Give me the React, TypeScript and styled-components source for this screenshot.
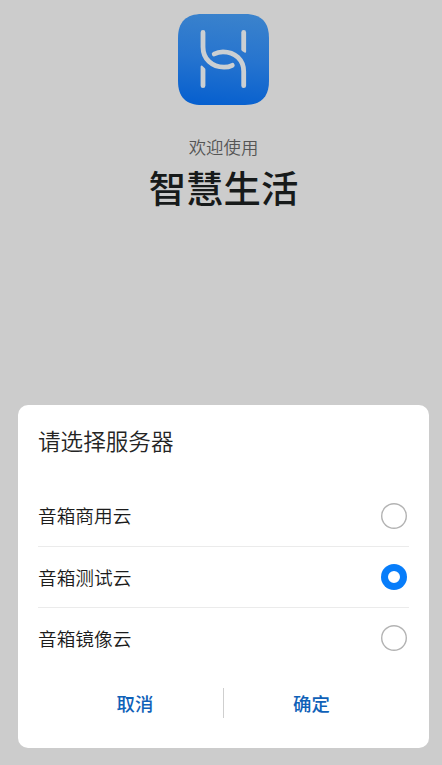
import React, { useState } from 'react';
import styled, { createGlobalStyle } from 'styled-components';

const GlobalStyle = createGlobalStyle`
  * { box-sizing: border-box; }
  html, body { margin: 0; background: #cccccc; }
  body { font-family: "Noto Sans CJK SC", sans-serif; overflow: hidden; }
  button { font-family: inherit; border: 0; background: none; padding: 0; }
`;

const Screen = styled.div`
  display: flex;
  flex-direction: column;
  justify-content: space-between;
  width: 442px;
  height: 765px;
  padding: 14px 13px 17px 18px;
  background: #cccccc;
`;

const Hero = styled.header`
  display: flex;
  flex-direction: column;
  align-items: center;
  width: 411px;
`;

const Logo = styled.svg`
  display: block;
  width: 91px;
  height: 91px;
`;

const Welcome = styled.p`
  margin: 28px 0 0;
  font-size: 17.4px;
  font-weight: 350;
  line-height: 28px;
  color: #555555;
`;

const AppName = styled.h1`
  margin: 1px 0 0;
  font-size: 37.4px;
  font-weight: 500;
  line-height: 50px;
  color: #171a1a;
`;

const Dialog = styled.section`
  display: flex;
  flex-direction: column;
  height: 343px;
  padding: 0 20px;
  border-radius: 10px;
  background: #ffffff;
`;

const DialogTitle = styled.h2`
  margin: 19px 0 0;
  font-size: 22.6px;
  font-weight: 350;
  line-height: 34px;
  color: #242424;
`;

const Options = styled.div`
  display: flex;
  flex-direction: column;
  margin-top: 27px;
`;

const Option = styled.button`
  display: flex;
  align-items: center;
  justify-content: space-between;
  height: 61px;
  padding-right: 2px;
  font-size: 18.7px;
  font-weight: 350;
  color: #1c1c1c;
  & + & { border-top: 1px solid #ebebeb; }
`;

const OptionName = styled.span`
  padding-bottom: 2px;
`;

const Radio = styled.span<{ $checked: boolean }>`
  width: 26px;
  height: 26px;
  border-radius: 50%;
  box-shadow: inset 0 0 0 ${p => (p.$checked ? '7px #077dfa' : '1.4px #b3b3b3')};
  background: #ffffff;
`;

const Actions = styled.footer`
  display: grid;
  grid-template-columns: 1fr 1px 1fr;
  align-items: center;
  height: 30px;
  margin-top: 20px;
`;

const Divider = styled.span`
  height: 30px;
  background: #cfcfcf;
`;

const Action = styled.button<{ $shift: number }>`
  padding-left: ${p => Math.max(p.$shift, 0)}px;
  padding-right: ${p => Math.max(-p.$shift, 0)}px;
  font-size: 18.4px;
  font-weight: 500;
  line-height: 30px;
  color: #0f61b8;
`;

const servers = ['音箱商用云', '音箱测试云', '音箱镜像云'];

export default function App() {
  const [selected, setSelected] = useState(1);
  return (
    <>
      <GlobalStyle />
      <Screen>
        <Hero>
          <Logo viewBox="0 0 91 91">
            <defs>
              <linearGradient id="tile" x1="0.55" y1="0" x2="0.45" y2="1">
                <stop offset="0" stopColor="#3a82cc" />
                <stop offset="0.5" stopColor="#2674cf" />
                <stop offset="1" stopColor="#0760cf" />
              </linearGradient>
            </defs>
            <path
              fill="url(#tile)"
              d="M24 0H67C83 0 91 8 91 24V67C91 83 83 91 67 91H24C8 91 0 83 0 67V24C0 8 8 0 24 0Z"
            />
            <g fill="none" stroke="#cbcfd2" strokeWidth="4.8" strokeLinecap="round">
              <path d="M25 18.4V33C25 45 34 53.2 46 53.2C49 53.2 51.8 52.6 54.3 51.3" />
              <path d="M36.2 40C38.8 38.5 41.8 37.8 45 37.8C57 37.8 65.7 46 65.7 57.5V71.7" />
            </g>
            <g fill="#cbcfd2">
              <path d="M63.3 18.4a2.4 2.4 0 0 1 4.8 0V37.4Q68.1 39.2 66.5 38.5L64.1 36.9Q63.3 36.3 63.3 35.3Z" />
              <path d="M22.6 71.7a2.4 2.4 0 0 0 4.8 0V55.5Q27.4 54.6 26.6 53.9L24.2 51.8Q22.6 50.8 22.6 53Z" />
            </g>
          </Logo>
          <Welcome>欢迎使用</Welcome>
          <AppName>智慧生活</AppName>
        </Hero>
        <Dialog role="dialog" aria-labelledby="server-title">
          <DialogTitle id="server-title">请选择服务器</DialogTitle>
          <Options role="radiogroup">
            {servers.map((name, i) => (
              <Option
                key={name}
                role="radio"
                aria-checked={i === selected}
                onClick={() => setSelected(i)}
              >
                <OptionName>{name}</OptionName>
                <Radio $checked={i === selected} />
              </Option>
            ))}
          </Options>
          <Actions>
            <Action $shift={9}>取消</Action>
            <Divider />
            <Action $shift={-10}>确定</Action>
          </Actions>
        </Dialog>
      </Screen>
    </>
  );
}
